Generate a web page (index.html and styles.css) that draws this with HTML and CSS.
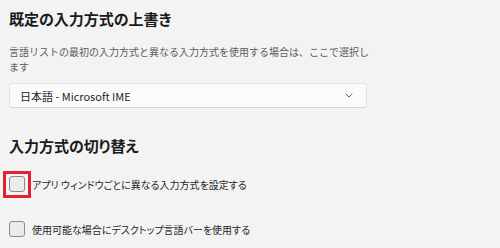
FILE: index.html
```html
<!DOCTYPE html>
<html lang="ja">
<head>
<meta charset="utf-8">
<link rel="stylesheet" href="styles.css">
</head>
<body>
<main class="page">
  <section class="group">
    <h2 class="title">既定の入力方式の上書き</h2>
    <p class="desc">言語リストの最初の入力方式と異なる入力方式を使用する場合は、ここで選択します</p>
    <div class="select">
      <span class="select-text">日本語 - Microsoft IME</span>
      <svg class="chevron" width="8" height="5" viewBox="0 0 8 5"><path d="M0.7 0.8 L4 4 L7.3 0.8" fill="none" stroke="#606060" stroke-width="1"/></svg>
    </div>
  </section>
  <section class="group group-2">
    <h2 class="title">入力方式の切り替え</h2>
    <label class="check-row">
      <span class="box-wrap"><span class="box"></span><span class="highlight"></span></span>
      <span class="check-label">アプリ ウィンドウごとに異なる入力方式を設定する</span>
    </label>
    <label class="check-row">
      <span class="box-wrap"><span class="box"></span></span>
      <span class="check-label">使用可能な場合にデスクトップ言語バーを使用する</span>
    </label>
  </section>
</main>
</body>
</html>
```

FILE: styles.css
```css
html, body {
  margin: 0;
  padding: 0;
  background: #f3f3f3;
}
body {
  font-family: "Noto Sans CJK JP", "Noto Sans", sans-serif;
  color: #1b1b1b;
  width: 500px;
  height: 248px;
  overflow: hidden;
}
.page {
  padding: 9px 0 0 9px;
}
.title {
  margin: 0;
  font-size: 15px;
  line-height: 20px;
  font-weight: 700;
  color: #1a1a1a;
  font-feature-settings: "palt";
}
.desc {
  margin: 16px 0 0 0;
  width: 362px;
  font-size: 10px;
  line-height: 14.5px;
  color: #5c5c5c;
}
.select {
  margin-top: 9px;
  height: 23px;
  border: 1px solid #e3e3e3;
  border-bottom-color: #d5d5d5;
  border-radius: 4px;
  background: #fbfbfb;
  display: flex;
  align-items: center;
  justify-content: space-between;
  padding: 0 13px 0 10px;
  box-sizing: content-box;
  width: 333px;
}
.select-text {
  font-size: 11px;
  color: #1f1f1f;
}
.chevron {
  display: block;
}
.group-2 {
  margin-top: 28px;
}
.check-row {
  display: flex;
  align-items: center;
  gap: 7px;
  height: 28px;
}
.check-row:first-of-type {
  margin-top: 14px;
}
.check-row + .check-row {
  margin-top: 17px;
}
.box-wrap {
  position: relative;
  width: 16px;
  height: 16px;
  display: block;
}
.box {
  display: block;
  width: 14px;
  height: 14px;
  border: 1px solid #8b8b8b;
  border-radius: 3px;
  background: #ebebeb;
}
.highlight {
  position: absolute;
  left: -6px;
  top: -5px;
  width: 22px;
  height: 21px;
  border: 3px solid #e5202a;
}
.check-label {
  font-size: 10px;
  color: #1f1f1f;
  font-feature-settings: "palt";
}
```
